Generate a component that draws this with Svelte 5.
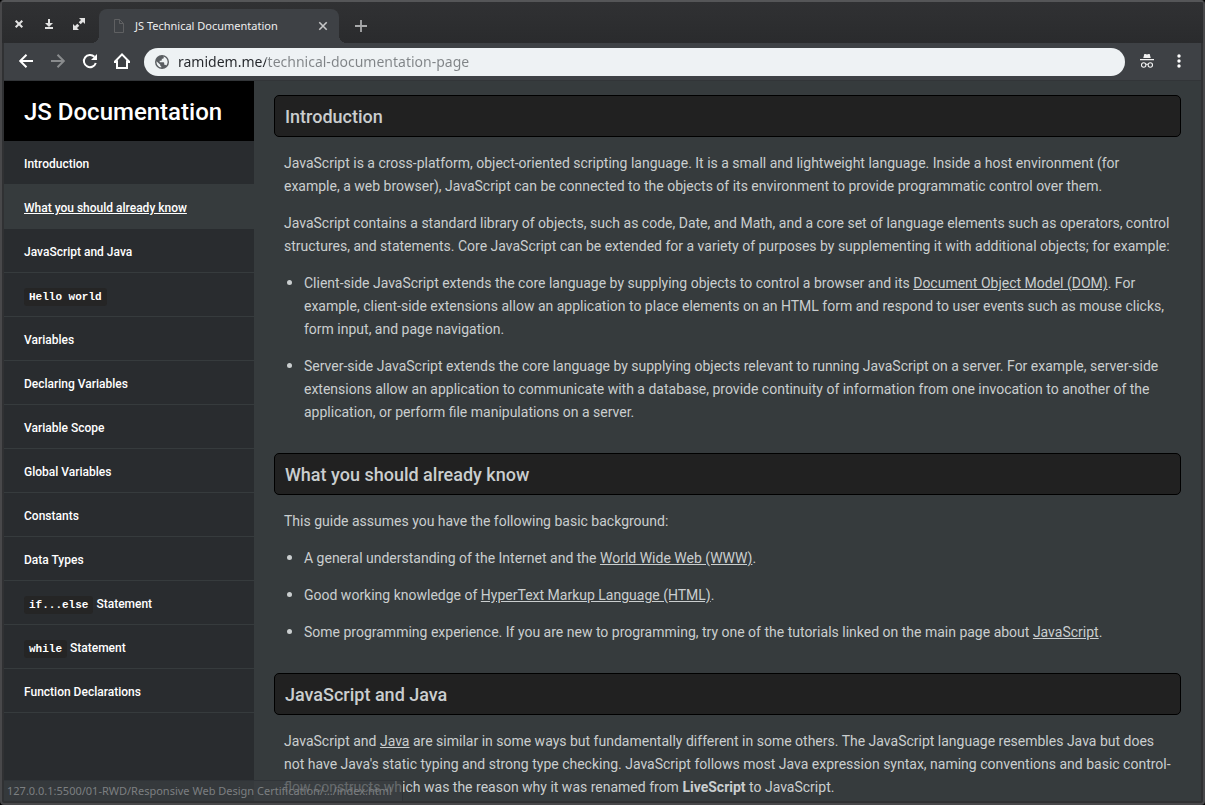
<script>
  const links = [
    { id: 'introduction', text: 'Introduction' },
    { id: 'already-know', text: 'What you should already know', active: true },
    { id: 'javascript-java', text: 'JavaScript and Java' },
    { id: 'hello-world', code: 'Hello world' },
    { id: 'variables', text: 'Variables' },
    { id: 'declaring', text: 'Declaring Variables' },
    { id: 'scope', text: 'Variable Scope' },
    { id: 'global', text: 'Global Variables' },
    { id: 'constants', text: 'Constants' },
    { id: 'data-types', text: 'Data Types' },
    { id: 'if-else', code: 'if...else', text: 'Statement' },
    { id: 'while', code: 'while', text: 'Statement' },
    { id: 'functions', text: 'Function Declarations' }
  ];
  let address = $state('ramidem.me/technical-documentation-page');
</script>

<div class="window">
  <header class="titlebar">
    <div class="controls">
      <button aria-label="Close window">
        <svg width="14" height="14" viewBox="0 0 14 14"><path d="M3.7 3.7l6.6 6.6M10.3 3.7l-6.6 6.6" stroke="#e2e2e2" stroke-width="2" fill="none" /></svg>
      </button>
      <button aria-label="Minimize window">
        <svg width="14" height="14" viewBox="0 0 14 14"><path d="M6 2h2v4h3L7 10 3 6h3zM3 10h8v2H3z" fill="#e2e2e2" /></svg>
      </button>
      <button aria-label="Maximize window">
        <svg width="14" height="14" viewBox="0 0 14 14"><path d="M7 1h6v6l-2-2-2.3 2.3-2-2L9 3zM1 7l2 2 2.3-2.3 2 2L5 11l2 2H1z" fill="#e2e2e2" /></svg>
      </button>
    </div>
    <div class="tab">
      <svg width="12" height="16" viewBox="0 0 12 16"><path d="M1.5 1.5h5l4 4v9h-9zM6.5 1.5v4h4" fill="none" stroke="#5f6062" /></svg>
      <span>JS Technical Documentation</span>
      <button aria-label="Close tab">
        <svg width="10" height="10" viewBox="0 0 10 10"><path d="M1.3 1.3l7.4 7.4M8.7 1.3L1.3 8.7" stroke="#c6c7c8" stroke-width="1.6" /></svg>
      </button>
    </div>
    <button class="new" aria-label="New tab">
      <svg width="12" height="12" viewBox="0 0 12 12"><path d="M6 0v12M0 6h12" stroke="#a9aaab" stroke-width="1.8" /></svg>
    </button>
  </header>

  <div class="toolbar">
    <button aria-label="Back">
      <svg width="16" height="16" viewBox="0 0 16 16"><path d="M15 8H2.5M8.5 1.7L2.2 8l6.3 6.3" fill="none" stroke="#fff" stroke-width="2" /></svg>
    </button>
    <button aria-label="Forward" disabled>
      <svg width="16" height="16" viewBox="0 0 16 16"><path d="M1 8h12.5M7.5 1.7L13.8 8l-6.3 6.3" fill="none" stroke="#898b8d" stroke-width="2" /></svg>
    </button>
    <button aria-label="Reload">
      <svg width="16" height="16" viewBox="0 0 16 16"><path d="M13.8 10A6.1 6.1 0 1 1 12.4 3.8" fill="none" stroke="#fff" stroke-width="2" /><path d="M15 1v6H9z" fill="#fff" /></svg>
    </button>
    <button aria-label="Home">
      <svg width="18" height="18" viewBox="0 0 18 18"><path d="M4 8.5V16h10V8.5M1.8 9.7L9 2.4l7.2 7.3" fill="none" stroke="#fff" stroke-width="2" /><path d="M1 9h3.5v2H1zM13.5 9H17v2h-3.5z" fill="#fff" /></svg>
    </button>
    <div class="address">
      <svg width="14" height="14" viewBox="0 0 14 14"><circle cx="7" cy="7" r="7" fill="#5a5e62" /><path d="M1.5 6.3l3.8 3.5v1l1 .7v1.1C3.5 12.2 1.3 9.9 1.5 6.3zM8.4 1.6C11 2.3 12.5 4.4 12.6 6.8c0 1.5-.5 2.8-1.4 3.8-.2-.6-.7-.9-1.3-.9h-.7V7.9c0-.4-.3-.7-.7-.7H4.7V5.8h1.4c.4 0 .7-.3.7-.7V3.7h1.1c.6 0 .9-.5.9-1.1z" fill="#eef2f4" /></svg>
      <input aria-label="Address" bind:value={address} spellcheck="false" />
    </div>
    <button aria-label="Incognito">
      <svg width="14" height="14" viewBox="0 0 14 14"><path d="M4.3 0h1.2L7 .5 8.5 0h1.2l1 4H3.3zM0 5h14v1.3H0z" fill="#f1f1f1" /><path d="M6 10.5q1-.8 2 0" fill="none" stroke="#f1f1f1" /><circle cx="3.7" cy="11" r="2.2" fill="none" stroke="#f1f1f1" stroke-width="1.1" /><circle cx="10.3" cy="11" r="2.2" fill="none" stroke="#f1f1f1" stroke-width="1.1" /></svg>
    </button>
    <button aria-label="Menu">
      <svg width="4" height="14" viewBox="0 0 4 14"><g fill="#fff"><circle cx="2" cy="2" r="1.7" /><circle cx="2" cy="7" r="1.7" /><circle cx="2" cy="12" r="1.7" /></g></svg>
    </button>
  </div>

  <div class="page">
    <nav>
      <h1>JS Documentation</h1>
      <ul>
        {#each links as link}
          <li>
            <a href={'#' + link.id} class:active={link.active}>{#if link.code}<code>{link.code}</code>{' '}{/if}{link.text ?? ''}</a>
          </li>
        {/each}
      </ul>
    </nav>

    <main>
      <section id="introduction">
        <h2>Introduction</h2>
        <p>JavaScript is a cross-platform, object-oriented scripting language. It is a small and lightweight language. Inside a host environment (for example, a web browser), JavaScript can be connected to the objects of its environment to provide programmatic control over them.</p>
        <p>JavaScript contains a standard library of objects, such as code, Date, and Math, and a core set of language elements such as operators, control structures, and statements. Core JavaScript can be extended for a variety of purposes by supplementing it with additional objects; for example:</p>
        <ul>
          <li>Client-side JavaScript extends the core language by supplying objects to control a browser and its <a href="#dom">Document Object Model (DOM)</a>. For example, client-side extensions allow an application to place elements on an HTML form and respond to user events such as mouse clicks, form input, and page navigation.</li>
          <li>Server-side JavaScript extends the core language by supplying objects relevant to running JavaScript on a server. For example, server-side extensions allow an application to communicate with a database, provide continuity of information from one invocation to another of the application, or perform file manipulations on a server.</li>
        </ul>
      </section>
      <section id="already-know">
        <h2>What you should already know</h2>
        <p>This guide assumes you have the following basic background:</p>
        <ul>
          <li>A general understanding of the Internet and the <a href="#www">World Wide Web (WWW)</a>.</li>
          <li>Good working knowledge of <a href="#html">HyperText Markup Language (HTML)</a>.</li>
          <li>Some programming experience. If you are new to programming, try one of the tutorials linked on the main page about <a href="#js">JavaScript</a>.</li>
        </ul>
      </section>
      <section id="javascript-java">
        <h2>JavaScript and Java</h2>
        <p>JavaScript and <a href="#java">Java</a> are similar in some ways but fundamentally different in some others. The JavaScript language resembles Java but does not have Java's static typing and strong type checking. JavaScript follows most Java expression syntax, naming conventions and basic control-flow constructs which was the reason why it was renamed from <strong>LiveScript</strong> to JavaScript.</p>
      </section>
    </main>
    <div class="status">127.0.0.1:5500/01-RWD/Responsive Web Design Certification/…/index.html</div>
  </div>
</div>

<style>
  :global(body) {
    margin: 0;
    background: #000;
  }
  .window {
    box-sizing: border-box;
    height: 100vh;
    display: flex;
    flex-direction: column;
    overflow: hidden;
    border: 2px solid #48484a;
    border-top-color: #555658;
    border-radius: 4px;
    background: #303133;
    font-family: Roboto, sans-serif;
  }
  button {
    display: flex;
    align-items: center;
    justify-content: center;
    padding: 0;
    border: 0;
    background: none;
  }
  svg {
    display: block;
    flex: none;
  }
  .titlebar {
    display: flex;
    align-items: flex-end;
    height: 41px;
    flex: none;
    background: linear-gradient(#303133, #2a2b2d);
  }
  .controls {
    display: flex;
    gap: 16px;
    height: 38px;
    padding: 0 13px 0 10px;
  }
  .controls button {
    width: 14px;
  }
  .tab {
    position: relative;
    display: flex;
    align-items: center;
    box-sizing: border-box;
    width: 240px;
    height: 34px;
    padding: 0 11px 0 14px;
    border-radius: 8px 8px 0 0;
    background: #3e4145;
    color: #eee;
    font: 11px/16px "Noto Sans", sans-serif;
  }
  .tab::before,
  .tab::after {
    content: '';
    position: absolute;
    bottom: 0;
    width: 8px;
    height: 8px;
  }
  .tab::before {
    right: 100%;
    background: radial-gradient(circle at 0 0, transparent 8px, #3e4145 8px);
  }
  .tab::after {
    left: 100%;
    background: radial-gradient(circle at 100% 0, transparent 8px, #3e4145 8px);
  }
  .tab span {
    flex: 1;
    margin-left: 10px;
    white-space: nowrap;
  }
  .new {
    height: 34px;
    margin-left: 16px;
  }
  .toolbar {
    display: flex;
    align-items: flex-start;
    box-sizing: border-box;
    height: 38px;
    flex: none;
    margin: 0 2px;
    padding: 5px 20px 0 6px;
    border-bottom: 1px solid #323538;
    background: #3e4145;
  }
  .toolbar button {
    width: 32px;
    height: 26px;
  }
  .toolbar button:last-child {
    width: 4px;
    margin-left: 14px;
  }
  .address {
    flex: 1;
    display: flex;
    align-items: center;
    gap: 9px;
    height: 28px;
    margin: 0 6px;
    padding: 0 11px;
    border-radius: 14px;
    background: #eef2f4;
  }
  .address input {
    flex: 1;
    min-width: 0;
    height: 28px;
    padding: 0;
    border: 0;
    outline: 0;
    background: linear-gradient(to right, #24272b 88px, #808487 88px);
    background-clip: text;
    color: transparent;
    font: 14px/28px "Noto Sans", sans-serif;
  }
  .page {
    position: relative;
    flex: 1;
    min-height: 0;
    display: flex;
    margin: 0 2px 2px;
    background: #363b3d;
  }
  nav {
    width: 250px;
    flex: none;
    background: #292c2f;
  }
  h1 {
    margin: 0;
    padding: 2px 20px 0;
    background: #000;
    color: #fff;
    font-size: 24px;
    font-weight: 500;
    line-height: 58px;
  }
  nav ul {
    margin: 0;
    padding: 0;
    list-style: none;
  }
  nav a {
    display: block;
    padding: 3px 20px 0;
    border-bottom: 1px solid #363b3d;
    color: #fff;
    font-size: 12px;
    font-weight: 500;
    line-height: 40px;
    text-decoration: none;
  }
  nav a.active {
    background: #363b3d;
    text-decoration: underline;
  }
  code {
    padding: 3px 5px;
    border-radius: 3px;
    background: #252525;
    font: bold 11px "Liberation Mono", monospace;
  }
  main {
    flex: 1;
    min-width: 0;
    padding: 14px 20px;
    overflow-y: auto;
    scrollbar-width: none;
    color: #cacecf;
    font-size: 14px;
    line-height: 23px;
  }
  section {
    margin-bottom: 29px;
  }
  h2 {
    margin: 0;
    padding: 2px 10px 0;
    border: 1px solid #000;
    border-radius: 5px;
    background: #212121;
    font-size: 18px;
    font-weight: 500;
    line-height: 38px;
  }
  p {
    margin: 14px 10px 0;
  }
  h2 + p {
    margin-top: 15px;
  }
  main ul {
    margin: 0 10px;
    padding-left: 20px;
    list-style: none;
  }
  main li {
    margin-top: 14px;
  }
  main li::before {
    content: '';
    float: left;
    width: 5px;
    height: 5px;
    margin: 8px 0 0 -17px;
    border-radius: 50%;
    background: #cacecf;
  }
  main a {
    color: inherit;
  }
  .status {
    position: absolute;
    left: 0;
    bottom: 0;
    box-sizing: border-box;
    min-width: 398px;
    padding: 0 10px 1px 3px;
    border: solid #303438;
    border-width: 1px 1px 0 0;
    border-radius: 0 3px 0 0;
    background: rgba(59, 62, 66, 0.7);
    color: #7c7f81;
    font: 11px/19px "Noto Sans", sans-serif;
    white-space: nowrap;
  }
</style>
